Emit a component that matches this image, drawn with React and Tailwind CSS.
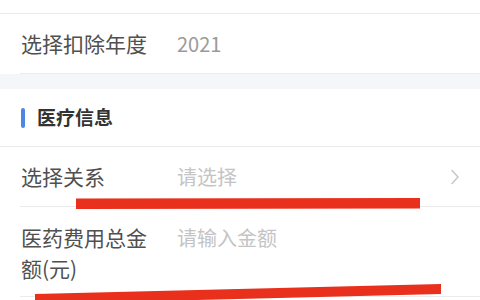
const cjk = { fontFamily: '"Noto Sans CJK SC", "Noto Sans", sans-serif' };

function Row({ label, value, placeholder, arrow, className = "" }) {
  return (
    <div className={`flex items-start border-b border-[#ececec] ml-[20px] pr-[20px] ${className}`}>
      <div className="w-[157px] shrink-0 pl-[1px] pr-[27px] text-[21px] leading-[31px] text-[#505050]">{label}</div>
      <div className={`flex-1 text-[20px] leading-[31px] ${value ? "text-[#9a9a9a]" : "text-[#c4c4c4]"}`}>
        {value || placeholder}
      </div>
      {arrow && (
        <svg width="12" height="31" viewBox="0 0 12 31" className="shrink-0 mr-[-1px]">
          <path d="M3 22.5 L9 16 L3 9.5" fill="none" stroke="#c8c8c8" strokeWidth="1.6" strokeLinecap="round" strokeLinejoin="round" />
        </svg>
      )}
    </div>
  );
}

export default function App() {
  return (
    <div className="relative w-[480px] h-[300px] overflow-hidden bg-white" style={cjk}>
      <div className="h-[14px] border-b border-[#ececec]" />
      <Row label="选择扣除年度" value="2021" className="pt-[14px] pb-[14px]" />
      <div className="h-[15px] bg-[#f4f6f9]" />
      <div className="flex items-center h-[58px] pl-[21px] border-b border-[#ececec]">
        <span className="w-[4px] h-[20px] rounded-full bg-[#4a88e2]" />
        <span className="ml-[12px] text-[19px] font-bold text-[#333333]">医疗信息</span>
      </div>
      <Row label="选择关系" placeholder="请选择" arrow className="pt-[14px] pb-[14px]" />
      <Row label="医药费用总金额(元)" placeholder="请输入金额" className="pt-[15px] pb-[12px]" />

      {/* hand-drawn red marks over the form */}
      <svg className="absolute inset-0 pointer-events-none" width="480" height="300" viewBox="0 0 480 300">
        <path d="M76 198.5 L420 198 L420 208.5 L76 209 Z" fill="#e8301c" />
        <path d="M35 294 L441 284 L441 294 L35 304 Z" fill="#e8301c" />
      </svg>
    </div>
  );
}
